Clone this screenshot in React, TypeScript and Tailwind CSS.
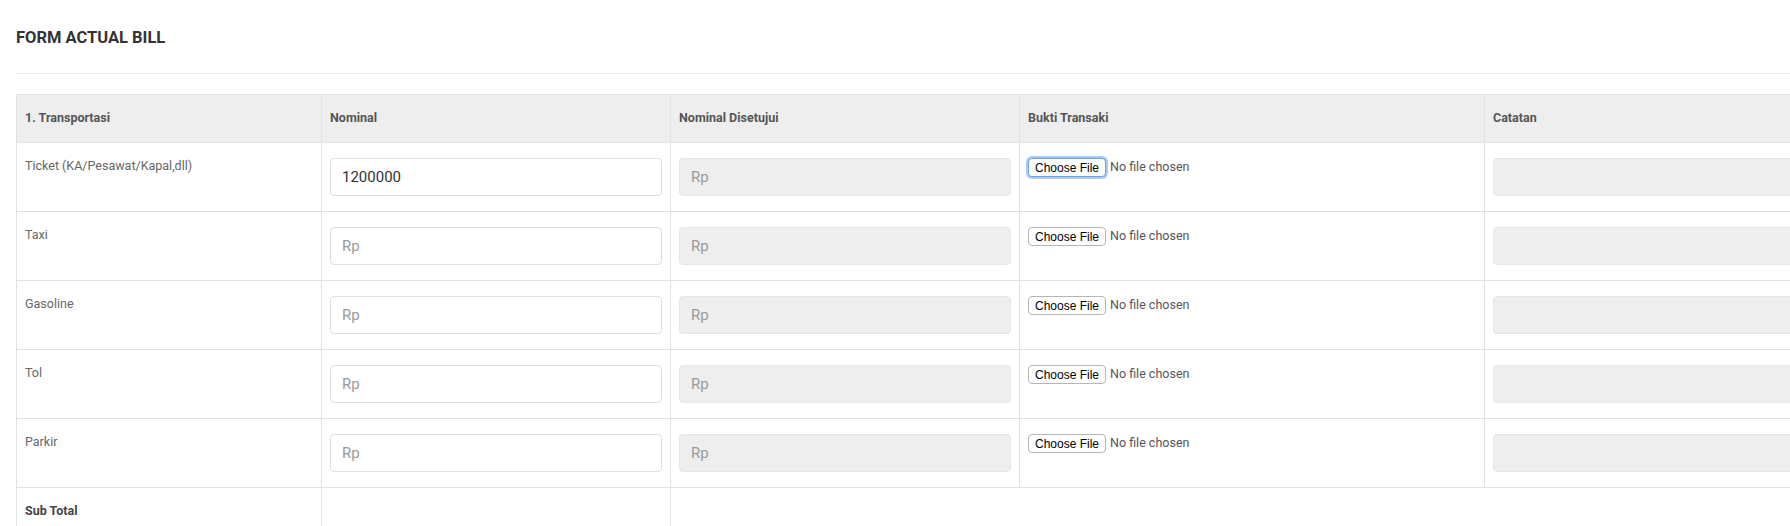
import React from "react";

type Row = { label: string; value?: string; focus?: boolean };

const rows: Row[] = [
  { label: "Ticket (KA/Pesawat/Kapal,dll)", value: "1200000", focus: true },
  { label: "Taxi" },
  { label: "Gasoline" },
  { label: "Tol" },
  { label: "Parkir" },
];

function FakeFile({ focus }: { focus?: boolean }) {
  return (
    <div className="flex items-center gap-[4px]">
      <span
        className={
          focus
            ? "inline-flex h-[19px] items-center rounded-[4px] border border-[#6aa1e6] bg-white px-[6px] text-[12px] leading-none text-black shadow-[0_0_0_2px_#a9cbf5] font-['Liberation_Sans',sans-serif]"
            : "inline-flex h-[19px] items-center rounded-[4px] border border-[#b5b5b5] bg-white px-[6px] text-[12px] leading-none text-black font-['Liberation_Sans',sans-serif]"
        }
      >
        Choose File
      </span>
      <span className="text-[12.5px] leading-none text-[#555]">No file chosen</span>
    </div>
  );
}

export default function App() {
  return (
    <div className="h-[526px] w-[1790px] overflow-hidden bg-white font-['Roboto',sans-serif]">
      <div className="pl-4 pt-[28px]">
        <h1 className="text-[16.5px] font-bold leading-[20px] text-[#333]">FORM ACTUAL BILL</h1>
        <div className="mt-[25px] border-t border-[#e9e9e9]" />
        <table className="mt-[20px] w-[1828px] table-fixed border-collapse">
          <colgroup>
            <col className="w-[305px]" />
            <col className="w-[349px]" />
            <col className="w-[349px]" />
            <col className="w-[465px]" />
            <col className="w-[360px]" />
          </colgroup>
          <thead>
            <tr className="h-[48px] bg-[#eeeeee]">
              {["1. Transportasi", "Nominal", "Nominal Disetujui", "Bukti Transaki", "Catatan"].map((h) => (
                <th
                  key={h}
                  className="border border-[#e2e2e2] px-2 text-left align-middle text-[12.5px] font-bold text-[#555]"
                >
                  {h}
                </th>
              ))}
            </tr>
          </thead>
          <tbody>
            {rows.map((r) => (
              <tr key={r.label}>
                <td className="border border-[#e2e2e2] px-2 pt-[14px] align-top text-[12.5px] leading-[18px] text-[#666]">
                  {r.label}
                </td>
                <td className="border border-[#e2e2e2] px-2 py-[15px] align-top">
                  <div className="flex h-[38px] items-center rounded-[4px] border border-[#dedede] bg-white px-[11px] text-[15px]">
                    {r.value ? (
                      <span className="text-[#333]">{r.value}</span>
                    ) : (
                      <span className="text-[#9a9a9a]">Rp</span>
                    )}
                  </div>
                </td>
                <td className="border border-[#e2e2e2] px-2 py-[15px] align-top">
                  <div className="flex h-[38px] items-center rounded-[4px] border border-[#e6e6e6] bg-[#eeeeee] px-[11px] text-[15px]">
                    <span className="text-[#9a9a9a]">Rp</span>
                  </div>
                </td>
                <td className="border border-[#e2e2e2] px-2 pt-[15px] align-top">
                  <FakeFile focus={r.focus} />
                </td>
                <td className="border border-[#e2e2e2] px-2 py-[15px] align-top">
                  <div className="h-[38px] rounded-[4px] border border-[#e6e6e6] bg-[#eeeeee]" />
                </td>
              </tr>
            ))}
            <tr className="h-[60px]">
              <td className="border border-[#e2e2e2] px-2 pt-[14px] align-top text-[12.5px] font-bold leading-[18px] text-[#444]">
                Sub Total
              </td>
              <td className="border border-[#e2e2e2]" />
              <td className="border border-[#e2e2e2]" colSpan={3} />
            </tr>
          </tbody>
        </table>
      </div>
    </div>
  );
}
